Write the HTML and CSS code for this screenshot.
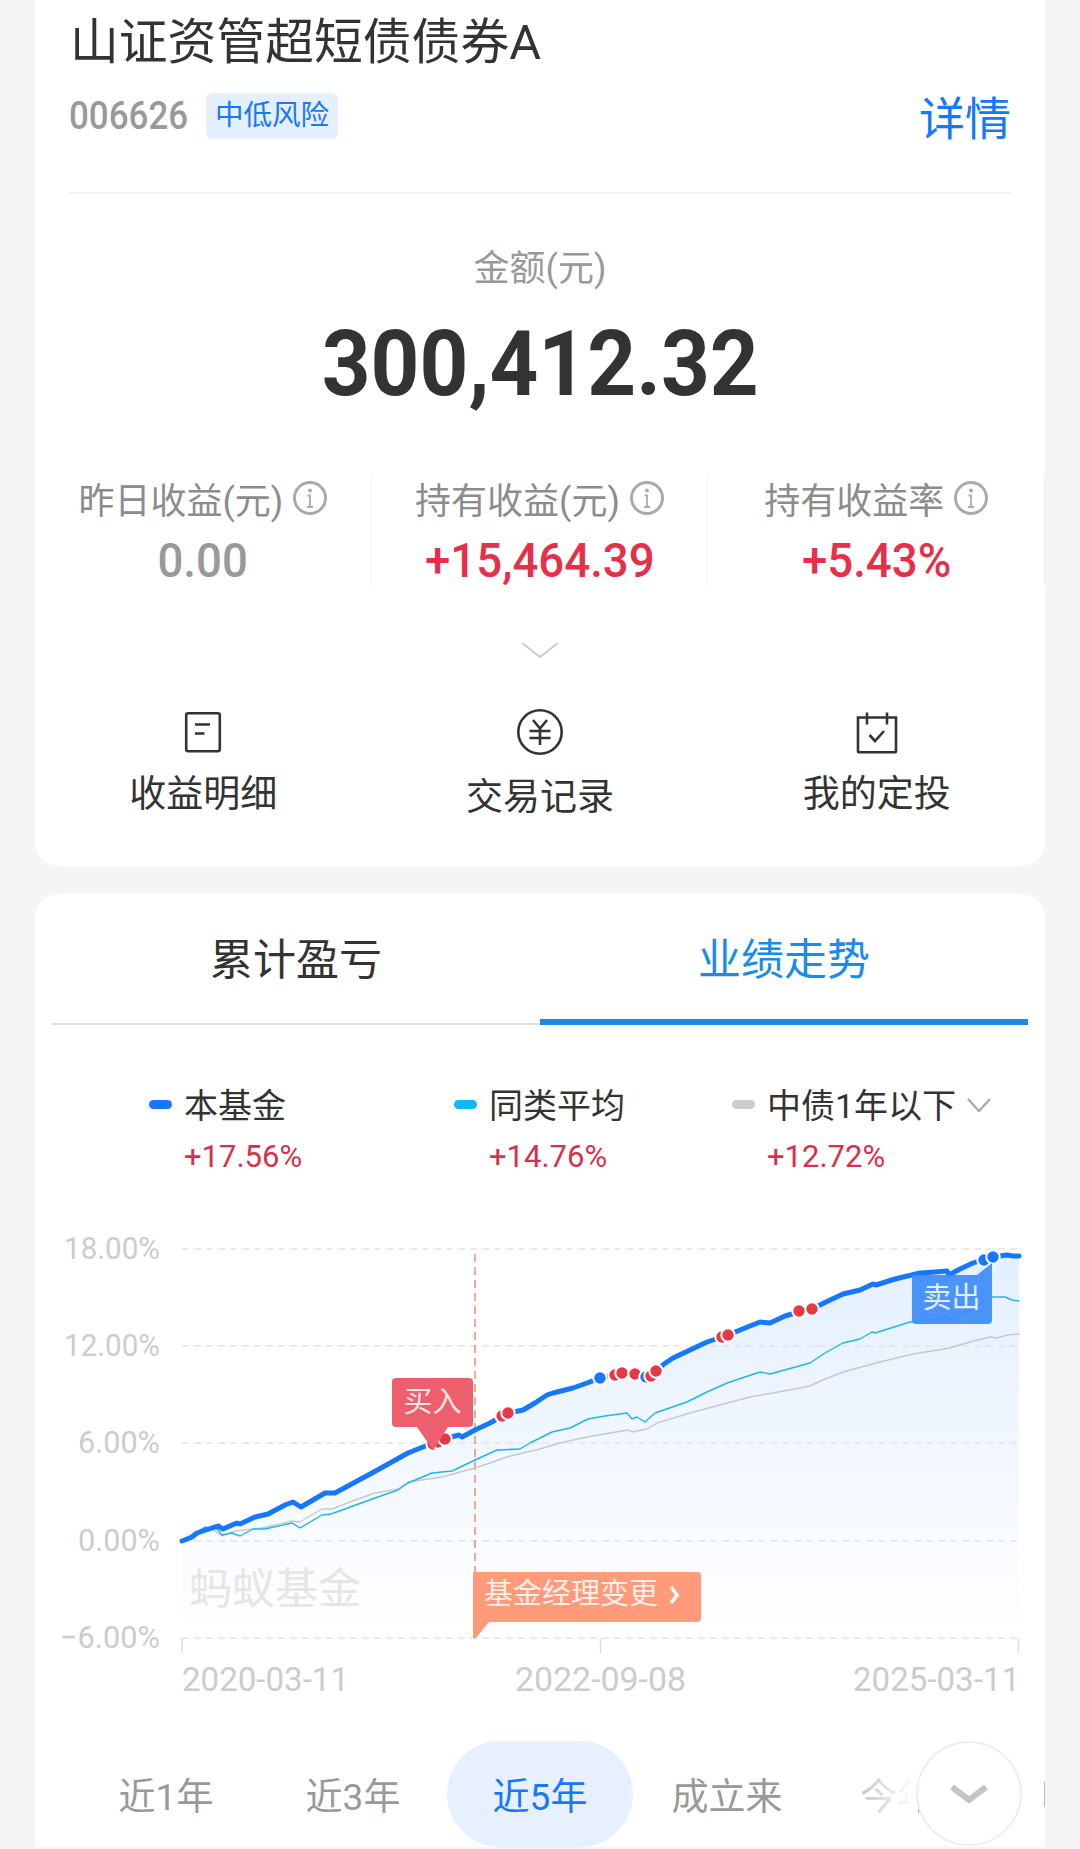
FILE: index.html
```html
<!DOCTYPE html>
<html lang="zh-CN">
<head>
  <meta charset="UTF-8" />
  <meta name="viewport" content="width=device-width, initial-scale=1.0" />
  <title>山证资管超短债债券A</title>
  <link rel="stylesheet" href="styles.css">
</head>
<body>
  <section class="card card-summary">
    <div class="fund-head">
      <h1 class="fund-name">山证资管超短债债券A</h1>
      <div class="fund-meta">
        <span class="fund-code">006626</span>
        <span class="risk-tag">中低风险</span>
        <a class="detail-link">详情</a>
      </div>
    </div>

    <p class="amount-label">金额(元)</p>
    <p class="amount-value"><span>300,412.32</span></p>

    <div class="stats">
      <div class="stat">
        <div class="stat-label">昨日收益(元)
          <svg class="info-icon" viewBox="0 0 34 34"><circle cx="17" cy="17" r="15.5"/><circle class="info-dot" cx="17" cy="9.5" r="1.9"/><path class="info-stem" d="M14.500 14.500h2.500v11.500M14 26h6"/></svg>
        </div>
        <div class="stat-value muted"><span>0.00</span></div>
      </div>
      <div class="stat">
        <div class="stat-label">持有收益(元)
          <svg class="info-icon" viewBox="0 0 34 34"><circle cx="17" cy="17" r="15.5"/><circle class="info-dot" cx="17" cy="9.5" r="1.9"/><path class="info-stem" d="M14.500 14.500h2.500v11.500M14 26h6"/></svg>
        </div>
        <div class="stat-value up"><span>+15,464.39</span></div>
      </div>
      <div class="stat">
        <div class="stat-label">持有收益率
          <svg class="info-icon" viewBox="0 0 34 34"><circle cx="17" cy="17" r="15.5"/><circle class="info-dot" cx="17" cy="9.5" r="1.9"/><path class="info-stem" d="M14.500 14.500h2.500v11.500M14 26h6"/></svg>
        </div>
        <div class="stat-value up"><span>+5.43%</span></div>
      </div>
    </div>

    <svg class="expand-arrow" viewBox="0 0 38 16"><path d="M1 1l18 14L37 1"/></svg>

    <div class="actions">
      <div class="action">
        <svg class="action-icon" viewBox="0 0 46 46"><rect x="6.2" y="4.2" width="33.6" height="38" rx="2"/><path d="M15 15.500h15M15 24.500h9.500"/></svg>
        <span>收益明细</span>
      </div>
      <div class="action action-low">
        <svg class="action-icon" viewBox="0 0 46 46"><circle cx="23" cy="23" r="21.7"/><path d="M16 11l7 8.500L30 11M12.500 22h21M12.500 29h21M23 19.500V36"/></svg>
        <span>交易记录</span>
      </div>
      <div class="action">
        <svg class="action-icon" viewBox="0 0 46 46"><path d="M4 8.500h38V42.200a1 1 0 0 1-1 1H5a1 1 0 0 1-1-1zM13 3.500v12M33 3.500v12"/><path d="M15.500 26l5.500 6 9-10"/></svg>
        <span>我的定投</span>
      </div>
    </div>
  </section>

  <section class="card card-chart">
    <div class="tabs">
      <div class="tab">累计盈亏</div>
      <div class="tab active">业绩走势</div>
    </div>

    <div class="legend">
      <div class="legend-item">
        <i class="legend-mark mark-fund"></i>
        <span class="legend-name">本基金</span>
        <span class="legend-rate">+17.56%</span>
      </div>
      <div class="legend-item">
        <i class="legend-mark mark-peer"></i>
        <span class="legend-name">同类平均</span>
        <span class="legend-rate">+14.76%</span>
      </div>
      <div class="legend-item">
        <i class="legend-mark mark-index"></i>
        <span class="legend-name">中债1年以下
          <svg class="legend-arrow" viewBox="0 0 24 14"><path d="M1 1l11 12L23 1"/></svg>
        </span>
        <span class="legend-rate">+12.72%</span>
      </div>
    </div>

    <!-- viewBox keeps the page coordinates of the plot -->
    <svg class="chart" viewBox="35 1220 1010 480">
      <defs>
        <linearGradient id="areaFill" x1="0" y1="0" x2="0" y2="1">
          <stop offset="0" stop-color="#e4efff"/>
          <stop offset="1" stop-color="#ffffff"/>
        </linearGradient>
      </defs>

      <path class="area" d="M182 1541L192 1537L197 1533L218 1526L223 1529L237 1523L240 1524L255 1517L268 1514L285 1505L293 1502L301 1507L325 1493L335 1493L372 1473L408 1453L423 1447L445 1439L458 1436L475 1430L490 1423L508 1413L523 1410L535 1403L547 1395L553 1393L573 1388L587 1383L600 1378L623 1373L635 1374L655 1372L664 1364L673 1358L690 1350L707 1342L728 1335L745 1328L760 1322L770 1323L785 1316L799 1312L812 1309L828 1301L843 1294L860 1290L873 1284L895 1279L920 1273L947 1271L949 1275L960 1269L973 1263L985 1259L993 1257L1007 1255L1019 1256V1638H182Z"/>

      <g class="grid">
        <path d="M182 1249H1019M182 1346H1019M182 1443H1019M182 1541H1019M182 1638H1019"/>
      </g>
      <path class="axis" d="M182 1638v15M600.500 1638v15M1018.500 1638v15"/>
      <path class="manager-line" d="M475 1254V1638"/>

      <g class="y-labels">
        <text x="160" y="1259" textLength="96" lengthAdjust="spacingAndGlyphs">18.00%</text>
        <text x="160" y="1356" textLength="96" lengthAdjust="spacingAndGlyphs">12.00%</text>
        <text x="160" y="1453" textLength="82" lengthAdjust="spacingAndGlyphs">6.00%</text>
        <text x="160" y="1551" textLength="82" lengthAdjust="spacingAndGlyphs">0.00%</text>
        <text x="160" y="1648" textLength="100" lengthAdjust="spacingAndGlyphs">−6.00%</text>
      </g>
      <g class="x-labels">
        <text x="182" y="1691" textLength="167" lengthAdjust="spacingAndGlyphs">2020-03-11</text>
        <text x="515" y="1691" textLength="171" lengthAdjust="spacingAndGlyphs">2022-09-08</text>
        <text x="853" y="1691" textLength="167" lengthAdjust="spacingAndGlyphs">2025-03-11</text>
      </g>
      <text class="watermark" x="189" y="1604">蚂蚁基金</text>

      <polyline class="line line-index" points="182,1541 195,1533 212,1529 222,1536 235,1531 262,1528 292,1521 300,1522 322,1509 332,1509 350,1502 375,1493 398,1489 408,1482 442,1477 475,1468 490,1463 507,1457 523,1453 540,1449 560,1443 587,1437 610,1433 628,1430 632,1432 647,1429 657,1423 690,1413 727,1403 750,1397 773,1393 810,1386 825,1379 843,1372 880,1362 913,1354 950,1348 970,1342 990,1337 997,1338 1007,1335 1019,1334"/>
      <polyline class="line line-peer" points="182,1541 195,1533 205,1527 217,1529 222,1535 232,1533 240,1536 253,1529 265,1529 292,1523 300,1528 322,1515 331,1514 375,1498 398,1490 408,1483 432,1473 452,1471 475,1460 497,1450 520,1449 530,1443 540,1438 552,1432 570,1428 588,1419 605,1416 627,1413 632,1419 637,1417 645,1422 655,1413 687,1402 707,1392 727,1383 760,1372 770,1374 810,1363 825,1353 843,1343 860,1339 872,1332 875,1333 910,1322 947,1317 949,1320 973,1309 992,1297 1005,1297 1012,1300 1019,1301"/>
      <polyline class="line line-fund" points="182,1541 192,1537 197,1533 218,1526 223,1529 237,1523 240,1524 255,1517 268,1514 285,1505 293,1502 301,1507 325,1493 335,1493 372,1473 408,1453 423,1447 445,1439 455,1436 459,1435 462,1437 475,1430 490,1423 508,1413 523,1410 535,1403 547,1395 553,1393 573,1388 587,1383 600,1378 623,1373 635,1374 655,1372 664,1364 673,1358 690,1350 707,1342 728,1335 745,1328 760,1322 770,1323 785,1316 799,1312 812,1309 828,1301 843,1294 860,1290 873,1284 876,1285 895,1279 920,1273 935,1272 947,1271 949,1275 960,1269 973,1263 985,1259 993,1257 1007,1255 1013,1256 1019,1256"/>

      <g class="dots-buy">
        <circle cx="433" cy="1444" r="6.700"/><circle cx="438" cy="1442" r="6.700"/><circle cx="445" cy="1439" r="6.700"/>
        <circle cx="502" cy="1416" r="6.700"/><circle cx="508" cy="1413" r="6.700"/>
        <circle cx="615" cy="1375" r="6.700"/><circle cx="622" cy="1373" r="6.700"/><circle cx="635" cy="1374" r="6.700"/>
      </g>
      <g class="dots-sell">
        <circle cx="600" cy="1378" r="6.700"/><circle cx="646" cy="1377" r="6.700"/>
      </g>
      <g class="dots-buy">
        <circle cx="651" cy="1376" r="6.700"/><circle cx="656" cy="1371" r="6.700"/>
        <circle cx="722" cy="1337" r="6.700"/><circle cx="728" cy="1335" r="6.700"/>
        <circle cx="799" cy="1311" r="6.700"/><circle cx="812" cy="1309" r="6.700"/>
      </g>
      <g class="dots-sell">
        <circle cx="984" cy="1260" r="6.700"/><circle cx="993" cy="1257" r="6.700"/>
      </g>

      <path class="tag-buy" d="M396 1378h73a4 4 0 0 1 4 4v41a4 4 0 0 1-4 4H448l-15 23-16-23H396a4 4 0 0 1-4-4v-41a4 4 0 0 1 4-4z"/>
      <text class="tag-text" x="432.500" y="1412" text-anchor="middle">买入</text>

      <path class="tag-sell" d="M912 1275h65l15-12v57a4 4 0 0 1-4 4H916a4 4 0 0 1-4-4z"/>
      <text class="tag-text" x="951.500" y="1308" text-anchor="middle">卖出</text>

      <path class="tag-manager" d="M473 1572h224a4 4 0 0 1 4 4v42a4 4 0 0 1-4 4H489l-13 16h-3z"/>
      <text class="tag-text" x="484" y="1604">基金经理变更</text>
      <path class="tag-chevron" d="M671 1587l6 8-6 8"/>
    </svg>

    <div class="ranges">
      <div class="range">近1年</div>
      <div class="range">近3年</div>
      <div class="range active">近5年</div>
      <div class="range">成立来</div>
      <div class="range range-short">今年</div>
      <div class="range-fade"></div>
      <div class="range-more">
        <svg viewBox="0 0 40 20"><path d="M3 3l17 13L37 3"/></svg>
      </div>
      <i class="range-edge"></i>
    </div>
  </section>
</body>
</html>
```

FILE: styles.css
```css
* {
  box-sizing: border-box;
}
body {
  margin: 0;
  width: 1080px;
  height: 1849px;
  overflow: hidden;
  background-color: #f5f5f5;
  font-family: Roboto, "Noto Sans CJK SC", sans-serif;
  color: #333;
}
p, h1 {
  margin: 0;
  font-weight: normal;
}
.card {
  margin: 0 35px;
  background: #fff;
}
.card-summary {
  height: 866px;
  border-radius: 0 0 24px 24px;
}
.card-chart {
  height: 953px;
  margin-top: 28px;
  border-radius: 24px 24px 0 0;
}

/* fund head */
.fund-head {
  margin: 0 34px;
  height: 194px;
  border-bottom: 2px solid #f3f3f3;
}
.fund-name {
  height: 93px;
  padding-left: 1px;
  font-size: 48.8px;
  line-height: 86px;
}
.fund-meta {
  display: flex;
  align-items: center;
  height: 46px;
}
.fund-code {
  width: 137px;
  font-size: 38px;
  font-weight: 500;
  color: #999;
  transform: scaleX(.92);
  transform-origin: left center;
}
.risk-tag {
  width: 132px;
  height: 46px;
  border-radius: 6px;
  background: #e5f0ff;
  color: #1677ff;
  font-size: 28.5px;
  line-height: 46px;
  text-align: center;
}
.detail-link {
  margin-left: auto;
  margin-top: 6px;
  font-size: 46px;
  line-height: 50px;
  color: #1677ff;
}

/* amount */
.amount-label {
  margin-top: 53px;
  text-align: center;
  font-size: 36px;
  line-height: 44px;
  color: #999;
}
.amount-value {
  margin-top: 23px;
  text-align: center;
  font-size: 91px;
  font-weight: 700;
  line-height: 100px;
  color: #333;
}
.amount-value span,
.stat-value span {
  display: inline-block;
}
.amount-value span {
  transform: scaleX(.937);
}

/* stats */
.stats {
  display: grid;
  grid-template-columns: repeat(3, 1fr);
  height: 103px;
  margin-top: 64px;
}
.stat {
  border-right: 1px solid #eee;
  text-align: center;
}
.stat-label {
  display: flex;
  justify-content: center;
  align-items: center;
  gap: 10px;
  height: 40px;
  font-size: 36px;
  color: #8c8c8c;
}
.info-icon {
  width: 34px;
  height: 34px;
  fill: none;
  stroke: #aaa;
  stroke-width: 3;
}
.info-dot {
  fill: #aaa;
  stroke: none;
}
.info-stem {
  stroke: #aaa;
  stroke-width: 1.8;
}
.stat-value {
  margin-top: 19px;
  font-size: 48px;
  font-weight: 500;
  line-height: 48px;
}
.stat-value span {
  transform: scaleX(.95);
}
.muted {
  color: #999;
}
.up {
  color: #e6304a;
}
.expand-arrow {
  display: block;
  width: 38px;
  height: 16px;
  margin: 61px auto 0;
  fill: none;
  stroke: #ccc;
  stroke-width: 2;
}

/* actions */
.actions {
  display: grid;
  grid-template-columns: repeat(3, 1fr);
  margin-top: 51px;
}
.action {
  display: flex;
  flex-direction: column;
  align-items: center;
  font-size: 37px;
  line-height: 50px;
}
.action span {
  margin-top: 15px;
}
.action-low span {
  margin-top: 18px;
}
.action-icon {
  width: 46px;
  height: 46px;
  fill: none;
  stroke: #333;
  stroke-width: 2.6;
}

/* tabs */
.tabs {
  display: flex;
  margin: 0 17px;
}
.tab {
  flex: 1;
  height: 131px;
  padding-top: 43px;
  border-bottom: 2px solid #ddd;
  text-align: center;
  font-size: 43px;
  line-height: 46px;
}
.tab.active {
  border-bottom: 6px solid #1a8ce8;
  color: #1a8ce8;
}

/* legend */
.legend {
  display: grid;
  grid-template-columns: 305px 278px 1fr;
  margin-top: 61px;
  padding-left: 114px;
}
.legend-item {
  display: grid;
  grid-template-columns: 23px auto;
  column-gap: 12px;
  row-gap: 11px;
  align-items: center;
  justify-content: start;
}
.legend-mark {
  height: 9px;
  border-radius: 5px;
  margin-top: -3px;
}
.mark-fund {
  background: #1677ff;
}
.mark-peer {
  background: #0fb8f5;
}
.mark-index {
  background: #ccc;
}
.legend-name {
  font-size: 34px;
  line-height: 40px;
}
.legend-arrow {
  width: 24px;
  height: 14px;
  margin-left: 2px;
  vertical-align: 6px;
  fill: none;
  stroke: #aaa;
  stroke-width: 2.4;
}
.legend-rate {
  grid-column: 2;
  font-size: 31px;
  line-height: 40px;
  color: #d9304a;
}

/* chart */
.chart {
  display: block;
  width: 1010px;
  height: 480px;
  margin-top: 43px;
  font-family: Roboto, "Noto Sans CJK SC", sans-serif;
}
.area {
  fill: url(#areaFill);
}
.grid path {
  fill: none;
  stroke: #e4e4e4;
  stroke-width: 1.5;
  stroke-dasharray: 7 5;
}
.axis {
  fill: none;
  stroke: #ddd;
  stroke-width: 1.5;
}
.manager-line {
  fill: none;
  stroke: #e8906f;
  stroke-width: 1.5;
  stroke-dasharray: 8 5;
}
.y-labels text {
  font-size: 31px;
  fill: #ccc;
  text-anchor: end;
}
.x-labels text {
  font-size: 33px;
  fill: #ccc;
}
.watermark {
  font-size: 43px;
  fill: #e6e6e6;
}
.line {
  fill: none;
  stroke-linejoin: round;
  stroke-linecap: round;
}
.line-fund {
  stroke: #1677ff;
  stroke-width: 5;
}
.line-peer {
  stroke: #1db8e8;
  stroke-width: 1.4;
}
.line-index {
  stroke: #c8c8c8;
  stroke-width: 1.4;
}
.dots-buy circle,
.dots-sell circle {
  stroke: #fff;
  stroke-width: 2;
}
.dots-buy circle {
  fill: #e63946;
}
.dots-sell circle {
  fill: #1677ff;
}
.tag-buy {
  fill: #ee5f6e;
}
.tag-sell {
  fill: #3d8bf7;
  opacity: .92;
}
.tag-manager {
  fill: #ff9b7b;
}
.tag-text {
  font-size: 29px;
  fill: #fff;
  fill-opacity: .85;
}
.tag-chevron {
  fill: none;
  stroke: #fff;
  stroke-width: 3.5;
}

/* range switch */
.ranges {
  position: relative;
  display: flex;
  height: 106px;
  margin-top: 41px;
  padding-left: 38px;
  overflow: hidden;
}
.range {
  flex: 0 0 186px;
  height: 106px;
  margin-right: 1px;
  border-radius: 53px;
  text-align: center;
  font-size: 37px;
  line-height: 114px;
  color: #999;
}
.range-short {
  flex-basis: 152px;
}
.range.active {
  background: #e6f0ff;
  color: #1677ff;
}
.range-fade {
  position: absolute;
  top: 0;
  left: 815px;
  width: 68px;
  height: 106px;
  background: linear-gradient(to right, rgba(255,255,255,.35), #fff 95%);
}
.range-more {
  position: absolute;
  top: 0;
  left: 881px;
  width: 106px;
  height: 105px;
  border: 2px solid #eee;
  border-radius: 50%;
  background: #fff;
  display: flex;
  justify-content: center;
  align-items: center;
}
.range-more svg {
  width: 40px;
  height: 20px;
  fill: none;
  stroke: #c4c4c4;
  stroke-width: 6;
}
.range-edge {
  position: absolute;
  top: 41px;
  left: 1009px;
  width: 1px;
  height: 25px;
  background: #bbb;
}
```
